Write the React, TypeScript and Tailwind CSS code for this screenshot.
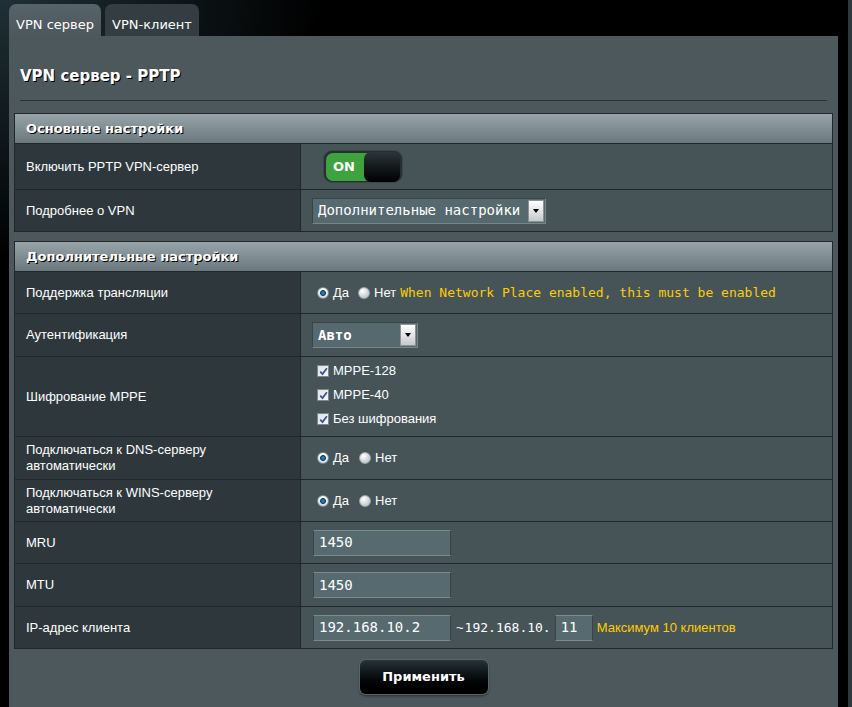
import React from 'react'

const sans = "font-['Liberation_Sans',Arial,sans-serif]"
const deja = "font-['DejaVu_Sans',Verdana,sans-serif]"
const mono = "font-['DejaVu_Sans_Mono',monospace]"

function Radio({ checked }: { checked?: boolean }) {
    if (checked) {
        return (
            <span className="flex h-[12px] w-[12px] shrink-0 items-center justify-center rounded-full border border-[#7f898d] bg-gradient-to-b from-white to-[#d5dadc]">
                <span className="block h-[6px] w-[6px] rounded-full border border-[#0b2d4a] bg-[#1e78be]" />
            </span>
        )
    }
    return (
        <span className="block h-[12px] w-[12px] shrink-0 rounded-full border border-[#9aa3a6] bg-[radial-gradient(circle_at_35%_30%,#ffffff,#c2c8cb_75%)]" />
    )
}

function Check() {
    return (
        <span className="flex h-[12px] w-[12px] shrink-0 items-center justify-center border border-[#7f878b] bg-gradient-to-br from-[#dfe3ea] to-[#f4f5f8]">
            <svg viewBox="0 0 10 10" className="block h-[9px] w-[9px]">
                <path d="M1.4 5.2 L3.9 7.9 L8.7 1.5" fill="none" stroke="#3b4f8c" strokeWidth="1.9" />
            </svg>
        </span>
    )
}

function Select({ text, w, bold }: { text: string; w: string; bold?: boolean }) {
    return (
        <div className={`flex h-[26px] items-center border border-[#3a4448] border-b-[#76858a] border-r-[#76858a] bg-[#56696e] pl-[5px] pr-[1px] ${w}`}>
            <span className={`flex-1 whitespace-pre text-[14px] text-white ${mono} ${bold ? 'font-bold' : ''}`}>{text}</span>
            <span className="flex h-[22px] w-[16px] items-center justify-center border border-[#8c9396] bg-gradient-to-b from-white to-[#c6c9cc]">
                <span className="block border-x-[3.5px] border-t-[4px] border-x-transparent border-t-black" />
            </span>
        </div>
    )
}

function Field({ value, w }: { value: string; w: string }) {
    return (
        <div className={`flex h-[26px] items-center border border-[#3a4448] border-t-[#7c898d] border-b-[#7c898d] bg-[#576a6f] pl-[5px] text-[14px] text-white ${mono} ${w}`}>
            {value}
        </div>
    )
}

function Row({ h, label, children }: { h: string; label: React.ReactNode; children?: React.ReactNode }) {
    return (
        <div className={`flex border-t border-[#1f272a] ${h}`}>
            <div className="flex w-[286px] items-center border-r border-[#1f272a] bg-[#2e383c] pl-[11px] text-[13px] leading-[16px] text-white">
                <div>{label}</div>
            </div>
            <div className="flex flex-1 items-center bg-[#465458] pl-[11px] text-[13px] text-white">{children}</div>
        </div>
    )
}

function Header({ title }: { title: string }) {
    return (
        <div className={`flex h-[29px] items-center bg-gradient-to-b from-[#97a3a8] to-[#6b797e] pl-[11px] text-[13px] font-bold text-white ${deja} [text-shadow:1px_1px_0_#000]`}>
            {title}
        </div>
    )
}

function YesNo() {
    return (
        <div className="flex items-center pl-[5px]">
            <Radio checked />
            <span className="ml-[4px]">Да</span>
            <span className="ml-[10px]">
                <Radio />
            </span>
            <span className="ml-[4px]">Нет</span>
        </div>
    )
}

export default function App() {
    return (
        <div className={`flex h-[707px] w-[852px] overflow-hidden bg-black bg-[radial-gradient(ellipse_320px_260px_at_0_0,#1f3036,#000)] ${sans}`}>
            <div className="ml-[9px] flex w-[829px] flex-col">
                <div className={`flex h-[36px] gap-[4px] pt-[4px] text-[13px] text-white ${deja}`}>
                    <div className="flex w-[92px] justify-center rounded-t-[7px] bg-gradient-to-b from-[#56636a] to-[#4d585c] pt-[13px] leading-[16px]">
                        VPN сервер
                    </div>
                    <div className="flex w-[94px] justify-center rounded-t-[7px] bg-[#343e42] pt-[13px] leading-[16px]">
                        VPN-клиент
                    </div>
                </div>
                <div className="flex-1 bg-[#4d585c] px-[5px]">
                    <div className={`ml-[6px] pt-[31px] text-[15px] font-bold leading-[18px] text-white ${deja} [text-shadow:1px_1px_0_#000]`}>
                        VPN сервер - PPTP
                    </div>
                    <div className="mx-[6px] mt-[15px] h-[1px] bg-[#2a3336]" />

                    <div className="mt-[12px] border border-[#1f272a]">
                        <Header title="Основные настройки" />
                        <Row h="h-[46px]" label="Включить PPTP VPN-сервер">
                            <div className="ml-[11px] flex h-[33px] w-[80px] items-center rounded-[9px] border border-[#3d474b] bg-[#263034] px-[2px]">
                                <div className={`flex h-[28px] w-[44px] items-center rounded-l-[7px] bg-[#3ea23e] pl-[7px] text-[13px] font-bold text-white ${deja}`}>
                                    ON
                                </div>
                                <div className="-ml-[6px] h-[30px] w-[37px] rounded-[7px] bg-gradient-to-b from-[#2c3639] to-[#020303]" />
                            </div>
                        </Row>
                        <Row h="h-[42px]" label="Подробнее о VPN">
                            <Select text="Дополнительные настройки" w="w-[234px]" />
                        </Row>
                    </div>

                    <div className="mt-[9px] border border-[#1f272a]">
                        <Header title="Дополнительные настройки" />
                        <Row h="h-[42px]" label="Поддержка трансляции">
                            <div className="flex items-center pl-[5px]">
                                <Radio checked />
                                <span className="ml-[4px]">Да</span>
                                <span className="ml-[9px]">
                                    <Radio />
                                </span>
                                <span className="ml-[4px]">Нет</span>
                                <span className={`ml-[4px] text-[#ffcc00] ${mono}`}>
                                    When Network Place enabled, this must be enabled
                                </span>
                            </div>
                        </Row>
                        <Row h="h-[43px]" label="Аутентификация">
                            <Select text="Авто" w="w-[106px]" bold />
                        </Row>
                        <Row h="h-[80px]" label="Шифрование MPPE">
                            <div className="-mt-[3px] flex flex-col pl-[5px]">
                                {['MPPE-128', 'MPPE-40', 'Без шифрования'].map((t) => (
                                    <div key={t} className="flex h-[24px] items-center">
                                        <Check />
                                        <span className="ml-[4px]">{t}</span>
                                    </div>
                                ))}
                            </div>
                        </Row>
                        <Row
                            h="h-[43px]"
                            label={
                                <>
                                    Подключаться к DNS-серверу
                                    <br />
                                    автоматически
                                </>
                            }>
                            <YesNo />
                        </Row>
                        <Row
                            h="h-[42px]"
                            label={
                                <>
                                    Подключаться к WINS-серверу
                                    <br />
                                    автоматически
                                </>
                            }>
                            <YesNo />
                        </Row>
                        <Row h="h-[42px]" label="MRU">
                            <div className="pl-[1px]">
                                <Field value="1450" w="w-[138px]" />
                            </div>
                        </Row>
                        <Row h="h-[43px]" label="MTU">
                            <div className="pl-[1px]">
                                <Field value="1450" w="w-[138px]" />
                            </div>
                        </Row>
                        <Row h="h-[42px]" label="IP-адрес клиента">
                            <div className="flex items-center pl-[1px]">
                                <Field value="192.168.10.2" w="w-[138px]" />
                                <span className="ml-[5px]">~</span>
                                <span className={`ml-[1px] ${mono}`}>192.168.10.</span>
                                <div className="ml-[4px]">
                                    <Field value="11" w="w-[38px]" />
                                </div>
                                <span className="ml-[4px] text-[#ffcc00]">Максимум 10 клиентов</span>
                            </div>
                        </Row>
                    </div>

                    <div className="mt-[11px] flex justify-center">
                        <div
                            className={`flex h-[34px] w-[128px] items-center justify-center rounded-[6px] bg-gradient-to-b from-[#273439] to-[#000] text-[13px] font-bold text-white shadow-[0_0_0_1px_#5a6569,0_2px_3px_rgba(0,0,0,0.5)] ${deja} [text-shadow:1px_1px_0_#000]`}>
                            Применить
                        </div>
                    </div>
                </div>
            </div>
            <div className="flex-1" />
            <div className="w-[4px] bg-[#2f383c]" />
        </div>
    )
}
